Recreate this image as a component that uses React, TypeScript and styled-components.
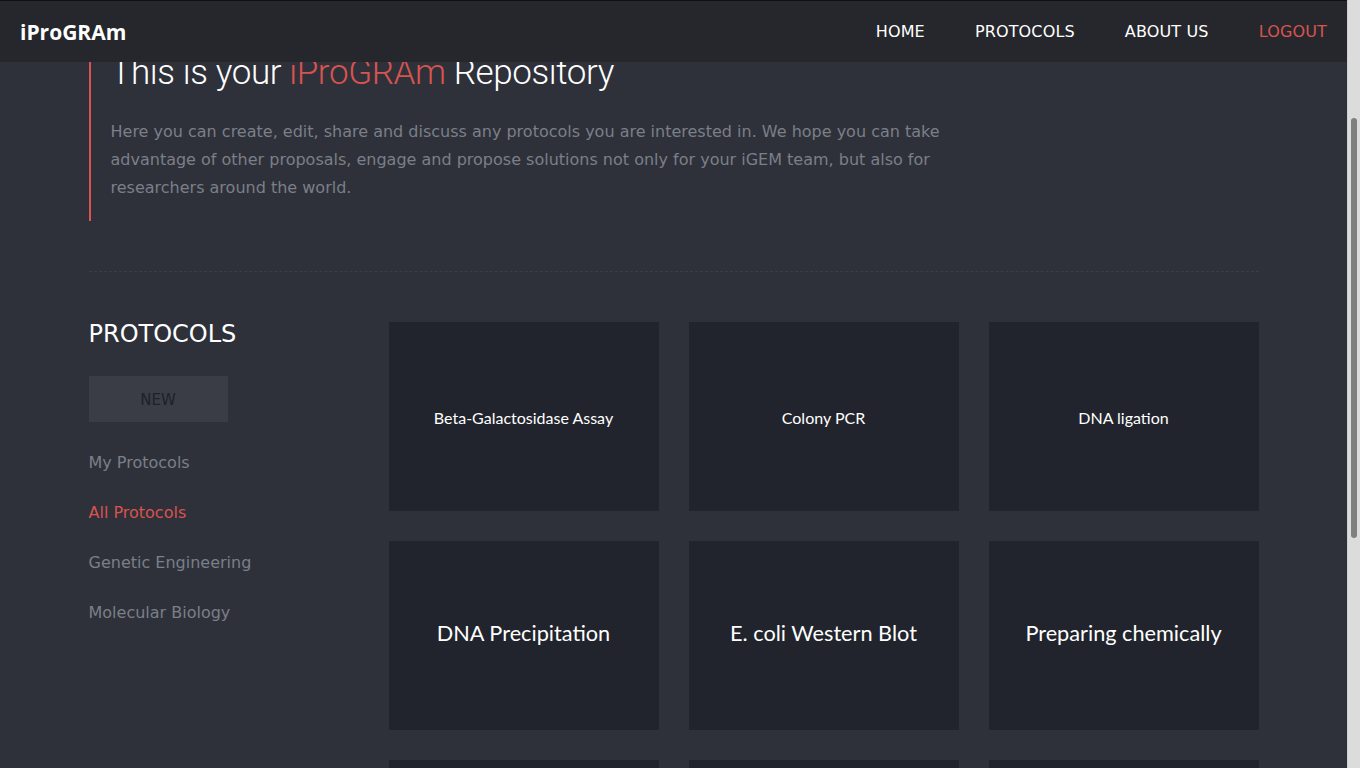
import React, { useLayoutEffect } from "react";
import styled, { createGlobalStyle } from "styled-components";

const GlobalStyle = createGlobalStyle`
  html, body {
    margin: 0;
    padding: 0;
    background: #2e313a;
    font-family: "DejaVu Sans", Verdana, sans-serif;
  }
  * { box-sizing: border-box; }
`;

const Page = styled.div`
  margin-right: 13px;
`;

const Header = styled.header`
  position: fixed;
  top: 0;
  left: 0;
  right: 13px;
  height: 62px;
  background: #25272c;
  border-top: 1px solid #0e0f11;
  display: flex;
  align-items: center;
  justify-content: space-between;
  padding: 0 20px;
  z-index: 10;
`;

const ScrollTrack = styled.div`
  position: fixed;
  top: 0;
  right: 0;
  width: 13px;
  height: 100vh;
  background: #dcdcdc;
  border-left: 1px solid #cfcfcf;
  z-index: 20;
`;

const ScrollThumb = styled.div`
  position: absolute;
  top: 118px;
  left: 3px;
  width: 6px;
  height: 420px;
  border-radius: 3px;
  background: #808080;
`;

const Logo = styled.a`
  font-family: "Open Sans", sans-serif;
  font-weight: 700;
  font-size: 21px;
  color: #ffffff;
  text-decoration: none;
`;

const Nav = styled.nav`
  display: flex;
  gap: 50px;
`;

const NavLink = styled.a<{ $accent?: boolean }>`
  font-family: "DejaVu Sans", sans-serif;
  font-size: 16px;
  letter-spacing: 0.15px;
  color: ${(p) => (p.$accent ? "#d9534f" : "#ffffff")};
  text-decoration: none;
`;

const Main = styled.main`
  width: 1170px;
  margin: 0 auto;
  padding: 249px 0 20px;
`;

const Quote = styled.section`
  border-left: 2px solid #d9534f;
  padding: 20px 0 19px 20px;
`;

const Title = styled.h1`
  font-family: Roboto, "Open Sans", sans-serif;
  font-weight: 300;
  font-size: 35px;
  letter-spacing: -0.4px;
  line-height: 1.1;
  color: #ffffff;
  margin: 0 0 25px;
`;

const Accent = styled.span`
  color: #d9534f;
`;

const Lead = styled.p`
  margin: 0;
  max-width: 877px;
  font-size: 16px;
  line-height: 28px;
  color: #7b7f88;
`;

const Divider = styled.hr`
  border: 0;
  border-top: 1px dashed #3b3e47;
  margin: 50px 0 0;
`;

const Layout = styled.div`
  display: grid;
  grid-template-columns: 300px 870px;
  margin-top: 50px;
`;

const Sidebar = styled.aside`
  display: flex;
  flex-direction: column;
  align-items: flex-start;
`;

const SideTitle = styled.h2`
  margin: 0;
  font-size: 24px;
  line-height: 24px;
  font-weight: 400;
  color: #ffffff;
`;

const NewButton = styled.button`
  margin-top: 30px;
  width: 139px;
  height: 46px;
  border: 0;
  padding: 2px 0 0;
  background: #3a3d46;
  color: #1f2126;
  font-family: "DejaVu Sans", sans-serif;
  font-size: 15px;
  cursor: pointer;
`;

const SideList = styled.ul`
  list-style: none;
  margin: 16px 0 0;
  padding: 0;
`;

const SideItem = styled.li<{ $active?: boolean }>`
  font-size: 16px;
  line-height: 50px;
  color: ${(p) => (p.$active ? "#d9534f" : "#7b7f88")};
`;

const Grid = styled.div`
  display: grid;
  grid-template-columns: repeat(3, 270px);
  grid-auto-rows: 189px;
  gap: 30px;
`;

const Card = styled.div<{ $large?: boolean }>`
  background: #21242c;
  display: flex;
  align-items: center;
  justify-content: center;
  text-align: center;
  padding: ${(p) => (p.$large ? "0 12px 4px" : "3px 12px 0")};
  font-family: Lato, "Open Sans", sans-serif;
  font-size: ${(p) => (p.$large ? "21.7px" : "16px")};
  color: #ffffff;
  white-space: nowrap;
  overflow: hidden;
`;

const cards: { name: string; large?: boolean }[] = [
  { name: "Beta-Galactosidase Assay" },
  { name: "Colony PCR" },
  { name: "DNA ligation" },
  { name: "DNA Precipitation", large: true },
  { name: "E. coli Western Blot", large: true },
  { name: "Preparing chemically", large: true },
  { name: "Restriction Digest", large: true },
  { name: "SDS-PAGE", large: true },
  { name: "Transformation", large: true },
  { name: "Gel Electrophoresis", large: true },
  { name: "Miniprep", large: true },
  { name: "PCR Purification", large: true },
];

export default function App() {
  useLayoutEffect(() => {
    window.scrollTo(0, 215);
  }, []);

  return (
    <Page>
      <GlobalStyle />
      <Header>
        <Logo href="#">iProGRAm</Logo>
        <Nav>
          <NavLink href="#">HOME</NavLink>
          <NavLink href="#">PROTOCOLS</NavLink>
          <NavLink href="#">ABOUT US</NavLink>
          <NavLink href="#" $accent>
            LOGOUT
          </NavLink>
        </Nav>
      </Header>
      <ScrollTrack>
        <ScrollThumb />
      </ScrollTrack>
      <Main>
        <Quote>
          <Title>
            This is your <Accent>iProGRAm</Accent> Repository
          </Title>
          <Lead>
            Here you can create, edit, share and discuss any protocols you are
            interested in. We hope you can take advantage of other proposals,
            engage and propose solutions not only for your iGEM team, but also
            for researchers around the world.
          </Lead>
        </Quote>
        <Divider />
        <Layout>
          <Sidebar>
            <SideTitle>PROTOCOLS</SideTitle>
            <NewButton>NEW</NewButton>
            <SideList>
              <SideItem>My Protocols</SideItem>
              <SideItem $active>All Protocols</SideItem>
              <SideItem>Genetic Engineering</SideItem>
              <SideItem>Molecular Biology</SideItem>
            </SideList>
          </Sidebar>
          <Grid>
            {cards.map((c) => (
              <Card key={c.name} $large={c.large}>
                {c.name}
              </Card>
            ))}
          </Grid>
        </Layout>
      </Main>
    </Page>
  );
}
